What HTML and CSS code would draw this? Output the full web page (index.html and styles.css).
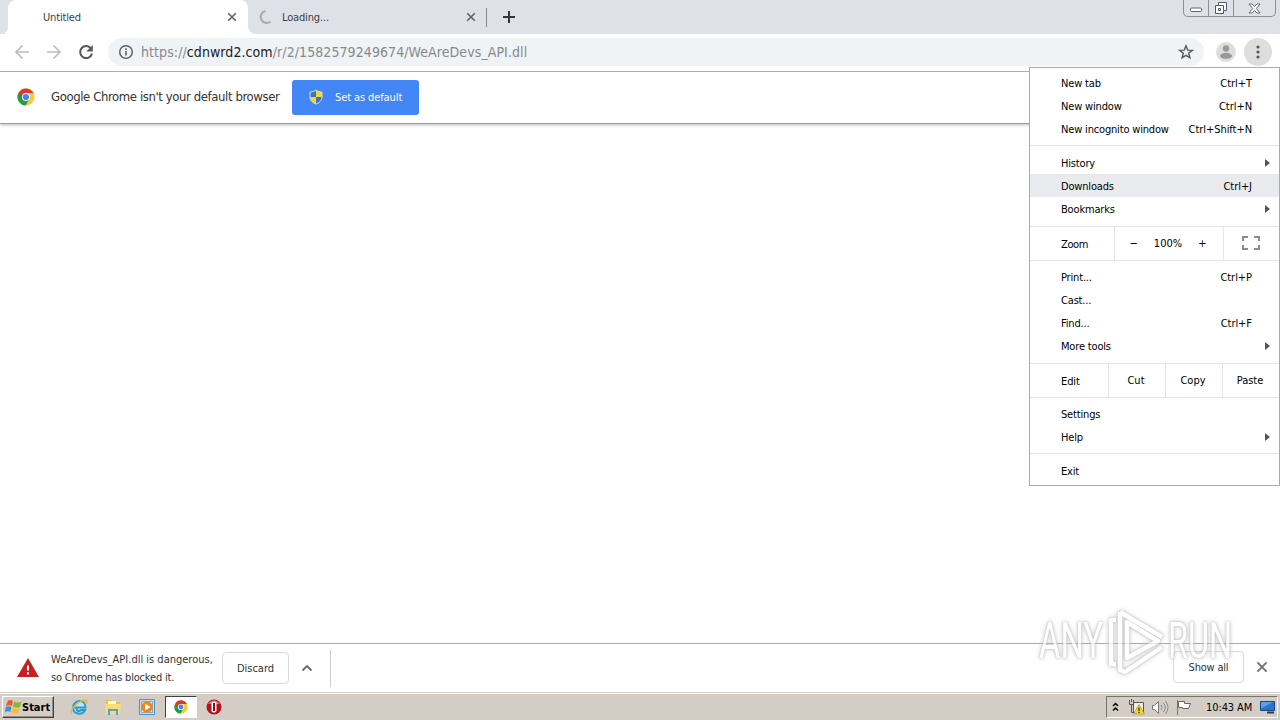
FILE: index.html
```html
<!DOCTYPE html>
<html lang="en">
<head>
    <meta charset="UTF-8">
    <title>Untitled</title>
    <link rel="stylesheet" href="styles.css">
</head>
<body>
    <svg class="defs" width="0" height="0">
        <symbol id="chrome" viewBox="0 0 18 18">
            <circle cx="9" cy="9" r="8.5" fill="#fcc934"/>
            <path d="M9 9 1.6 4.7A8.5 8.5 0 0 0 8.6 17.5L12.4 11z" fill="#1e9e4b"/>
            <path d="M1.6 4.7A8.5 8.5 0 0 1 16.5 5H9L5.6 11z" fill="#e0382b"/>
            <circle cx="9" cy="9" r="4" fill="#fff"/>
            <circle cx="9" cy="9" r="3.1" fill="#4285f4"/>
        </symbol>
        <symbol id="close" viewBox="0 0 10 10">
            <path d="M1.2 1.2 8.8 8.8M8.8 1.2 1.2 8.8" fill="none" stroke="currentColor" stroke-width="1.6"/>
        </symbol>
    </svg>

    <header class="tabstrip">
        <div class="edge"></div>
        <div class="tab active">
            <span class="tab-title">Untitled</span>
            <svg class="close" width="10" height="10"><use href="#close"/></svg>
        </div>
        <div class="tab loading">
            <svg class="spinner" width="16" height="16" viewBox="0 0 16 16"><path d="M7.5 2A6 6 0 1 0 12.500 12.500" fill="none" stroke="#a9abaf" stroke-width="2"/></svg>
            <span class="tab-title">Loading...</span>
            <svg class="close" width="10" height="10"><use href="#close"/></svg>
        </div>
        <svg class="plus" width="12" height="12" viewBox="0 0 12 12"><path d="M6 0v12M0 6h12" stroke="#33363a" stroke-width="2"/></svg>
        <div class="window-buttons">
            <span class="wb min"><svg width="14" height="6" viewBox="0 0 14 6"><rect x="1.5" y="1" width="11" height="3.5" rx="1" fill="#fff" stroke="#62666c"/></svg></span>
            <span class="wb max"><svg width="14" height="14" viewBox="0 0 14 14"><path d="M4.5 1.500h8v8h-3v3h-8v-8h3z" fill="#fff" stroke="#555a62"/><path d="M4.500 4.500h5v5M4.500 7.500h2v2h-2z" fill="none" stroke="#555a62"/></svg></span>
            <span class="wb quit"><svg width="13" height="11" viewBox="0 0 13 11"><path d="M1 1h3.200l2.300 2.500L8.800 1H12L8.300 5.500 12 10H8.800L6.500 7.500 4.200 10H1l3.700-4.500z" fill="#fff" stroke="#666a71"/></svg></span>
        </div>
    </header>

    <nav class="toolbar">
        <svg class="nav-icon dim" width="16" height="16" viewBox="0 0 16 16"><path d="M15 8H2.500M8.500 1.500 2 8l6.500 6.500"/></svg>
        <svg class="nav-icon dim" width="16" height="16" viewBox="0 0 16 16"><path d="M1 8h12.500M7.500 1.500 14 8l-6.500 6.500"/></svg>
        <svg class="nav-icon" width="16" height="16" viewBox="0 0 16 16"><path d="M13.200 4.800A6 6 0 1 0 14 9.500"/><path class="fill" d="M14.800 1v6.500H8.300z"/></svg>
        <div class="address">
            <svg class="info" width="16" height="16" viewBox="0 0 16 16"><circle cx="8" cy="8" r="6.300" fill="none" stroke="#5f6368" stroke-width="1.500"/><path d="M8 7v4.500M8 4.300v1.600" stroke="#5f6368" stroke-width="1.600"/></svg>
            <span class="url">https://<b>cdnwrd2.com</b>/r/2/1582579249674/WeAreDevs_API.dll</span>
            <svg class="star" width="16" height="16" viewBox="0 0 16 16"><path d="m8 1.800 1.700 4.300 4.600.3-3.600 2.900 1.200 4.500L8 11.300l-3.900 2.500 1.200-4.500-3.600-2.900 4.600-.3z" fill="none" stroke="#55595e" stroke-width="1.400"/></svg>
        </div>
        <svg class="avatar" width="20" height="20" viewBox="0 0 20 20"><circle cx="10" cy="10" r="10" fill="#dedede"/><circle cx="10" cy="6.500" r="3.200" fill="#999"/><ellipse cx="10" cy="13.800" rx="6" ry="3" fill="#999"/></svg>
        <svg class="dots" width="28" height="28" viewBox="0 0 28 28"><circle cx="14" cy="14" r="14" fill="#dedede"/><g fill="#55585c"><circle cx="14" cy="9" r="1.600"/><circle cx="14" cy="14" r="1.600"/><circle cx="14" cy="19" r="1.600"/></g></svg>
    </nav>

    <section class="infobar">
        <svg class="logo" width="18" height="18"><use href="#chrome"/></svg>
        <span class="message">Google Chrome isn't your default browser</span>
        <button class="default">
            <svg width="14" height="16" viewBox="0 0 14 16"><path d="M7 1C5 2.500 3 3 1 3v5c0 3.500 3 6 6 7 3-1 6-3.500 6-7V3c-2 0-4-.5-6-2z" fill="#f8d23c"/><path d="M7 1C5 2.500 3 3 1 3v5h6zM7 8h6c0 3.500-3 6-6 7z" fill="#3278c8"/><path d="M7 1C5 2.500 3 3 1 3v5c0 3.500 3 6 6 7 3-1 6-3.500 6-7V3c-2 0-4-.5-6-2z" fill="none" stroke="#e5e1b2"/></svg>
            <span>Set as default</span>
        </button>
    </section>

    <main class="page"></main>

    <section class="shelf">
        <svg class="warning" width="22" height="20" viewBox="0 0 22 20"><path d="M11 0 22 19H0z" fill="#c5221f"/><path d="M11 7.500v5M11 14.200v2.200" stroke="#fff" stroke-width="2"/></svg>
        <p class="danger">WeAreDevs_API.dll is dangerous,<br><span class="blocked">so Chrome has blocked it.</span></p>
        <button class="discard">Discard</button>
        <svg class="chevron" width="12" height="8" viewBox="0 0 12 8"><path d="m1.500 6.500 4.500-4.500 4.500 4.500" fill="none" stroke="#686b70" stroke-width="1.800"/></svg>
        <div class="divider"></div>
        <button class="show-all">Show all</button>
        <svg class="shelf-close" width="12" height="12"><use href="#close"/></svg>
    </section>

    <footer class="taskbar">
        <div class="start">
            <svg width="17" height="16" viewBox="0 0 17 16"><path d="M2.500 2.500Q5 0 8 2L6.800 7Q4 5.500 1 7z" fill="#e85d27"/><path d="M9 2.500q3.500 2 7.500.3L15 8q-3.500 1.500-7-.5z" fill="#83b93b"/><path d="M.8 8Q3.500 6.500 6.500 8l-1.300 5Q3 11.500 0 13z" fill="#3f8ed0"/><path d="M7.500 8.500q3.500 2 7 .5l-1.500 5q-3.500 1.500-7-.5z" fill="#f8be2c"/></svg>
            <span>Start</span>
        </div>
        <svg class="task" width="18" height="18" viewBox="0 0 18 18"><path d="M4 9.500h11.500C15.500 0 3 1.500 3 9.800c0 7 9.500 7.700 12 2.200h-4c-1.500 2-4.500 1-4.500-1.500" fill="#bce8fa" stroke="#249bd8" stroke-width="2"/><path d="M1.500 16C-1 11 10 2 15.500 2c2.500 0 1.500 3 .5 4" fill="none" stroke="#e9b940" stroke-width="1.500"/></svg>
        <svg class="task" width="18" height="18" viewBox="0 0 18 18"><path d="M2 2h6l1 2h7v11H2z" fill="#e9bf4e"/><path d="M4 3h8v4H4z" fill="#fffce2"/><path d="M1 6h16l-1 10H2z" fill="#f8dc78"/><path d="M4 17v-6h10v6h-2v-4H6v4z" fill="#4ba5db"/></svg>
        <svg class="task" width="18" height="18" viewBox="0 0 18 18"><path d="M1.500 1.500h15v15h-15z" fill="#c2dcf0" stroke="#4b93c9"/><path d="M3.500 3.500h11v11h-11z" fill="#e4eef5" stroke="#78add2"/><circle cx="9" cy="9" r="5.800" fill="#f28518"/><path d="m7 5.500 5.500 3.500L7 12.500z" fill="#fff"/></svg>
        <div class="task-active"><svg width="14" height="14"><use href="#chrome"/></svg></div>
        <svg class="task opera" width="16" height="16" viewBox="0 0 16 16"><circle cx="8" cy="8" r="7.500" fill="#b3131b"/><path d="M2 5a7 7 0 0 1 12 0z" fill="#dd6d6d"/><rect x="5.500" y="2.500" width="5" height="11" rx="2" fill="#fff"/><path d="M8 4v8" stroke="#8b1015" stroke-width="2"/></svg>
        <div class="tray">
            <svg class="more" width="7" height="10" viewBox="0 0 7 10"><path d="m1 4 2.500-2.500L6 4M1 8.500 3.500 6 6 8.500" fill="none" stroke="#000" stroke-width="1.500"/></svg>
            <svg class="network" width="17" height="16" viewBox="0 0 17 16"><path d="M5.500 3.500h10v10h-10z" fill="#eee" stroke="#555"/><path d="M1.500 1v4.500h4V1M3.500 0v3M3.500 6v7.500h4" fill="none" stroke="#555"/><path d="m11 5.500 5.500 9.500h-11z" fill="#f7d821" stroke="#ab8300" stroke-width=".6"/><path d="M11 8.500v3.500M11 12.800V14" stroke="#222" stroke-width="1.200"/></svg>
            <svg class="volume" width="17" height="15" viewBox="0 0 17 15"><path d="M.5 5.500h2l4-4v12l-4-4h-2z" fill="#fff" stroke="#777"/><path d="M9 5q2 2.500 0 5M11.500 3q3.500 4.500 0 9M13.500 1q5 6.500 0 13" fill="none" stroke="#8c8c8c"/></svg>
            <svg class="flag" width="17" height="15" viewBox="0 0 17 15"><path d="M2.500 1.500h6v2h6l-2 5h-6v-1h-4z" fill="#fff" stroke="#666"/><path d="M1.500 0v15" stroke="#777"/></svg>
            <time>10:43 AM</time>
            <svg class="desktop" width="15" height="14" viewBox="0 0 15 14"><path d="M.5 1.500h14v9H.5z" fill="#2b74c7" stroke="#15498b"/><path d="M1 2h12L2 8H1z" fill="#5da0e5"/><path d="M7 12.500h7" stroke="#263c5b" stroke-width="2"/></svg>
        </div>
    </footer>

    <aside class="menu">
        <div class="group first">
            <div class="item"><span>New tab</span><kbd>Ctrl+T</kbd></div>
            <div class="item"><span>New window</span><kbd>Ctrl+N</kbd></div>
            <div class="item"><span>New incognito window</span><kbd>Ctrl+Shift+N</kbd></div>
        </div>
        <div class="group second">
            <div class="item"><span>History</span><i class="arrow"></i></div>
            <div class="item hover"><span>Downloads</span><kbd>Ctrl+J</kbd></div>
            <div class="item"><span>Bookmarks</span><i class="arrow"></i></div>
        </div>
        <div class="split">
            <span class="label zoom-label">Zoom</span>
            <span class="cell zoom"><b>−</b><span>100%</span><b>+</b></span>
            <span class="cell full"><svg width="18" height="14" viewBox="0 0 18 14"><path d="M1 5V1h5M12 1h5v4M17 9v4h-5M6 13H1V9" fill="none" stroke="#8b8d90" stroke-width="2"/></svg></span>
        </div>
        <div class="group">
            <div class="item"><span>Print...</span><kbd>Ctrl+P</kbd></div>
            <div class="item"><span>Cast...</span></div>
            <div class="item"><span>Find...</span><kbd>Ctrl+F</kbd></div>
            <div class="item"><span>More tools</span><i class="arrow"></i></div>
        </div>
        <div class="split">
            <span class="label edit-label">Edit</span>
            <span class="cell edit">Cut</span>
            <span class="cell edit">Copy</span>
            <span class="cell edit">Paste</span>
        </div>
        <div class="group settings">
            <div class="item"><span>Settings</span></div>
            <div class="item"><span>Help</span><i class="arrow"></i></div>
        </div>
        <div class="group last">
            <div class="item"><span>Exit</span></div>
        </div>
    </aside>

    <svg class="watermark" width="210" height="80" viewBox="0 0 210 80">
        <g class="mark">
            <text x="9" y="56" textLength="64" lengthAdjust="spacingAndGlyphs">ANY</text>
            <path d="M86 18h-5v44h5M90 10v58l5 2 37-25M90 10l42 25M97 20v36l31-17z"/>
            <text x="138" y="56" textLength="64" lengthAdjust="spacingAndGlyphs">RUN</text>
        </g>
    </svg>
</body>
</html>
```
FILE: styles.css
```css
* {
    box-sizing: border-box;
}

body {
    margin: 0;
    width: 1280px;
    height: 720px;
    overflow: hidden;
    display: flex;
    flex-direction: column;
    background: #fff;
    color: #333;
    font-family: "DejaVu Sans Condensed", "DejaVu Sans", sans-serif;
    font-stretch: condensed;
    font-size: 11px;
    white-space: nowrap;
}

svg {
    display: block;
    flex: none;
}

button {
    font: inherit;
    padding: 0;
}

.defs {
    position: absolute;
}

/* tabs */
.tabstrip {
    height: 34px;
    flex: none;
    display: flex;
    align-items: center;
    background: #dee1e8;
}

.edge {
    width: 8px;
    height: 34px;
    background: #dee1e8;
    border-bottom-right-radius: 7px;
    box-shadow: 5px 5px 0 #fff;
    clip-path: inset(0);
}

.tab {
    height: 34px;
    display: flex;
    align-items: center;
    color: #3c4043;
}

.tab-title {
    letter-spacing: -.15px;
}

.active {
    width: 240px;
    padding: 0 11px 0 35px;
    background: #fff;
    border-radius: 8px 8px 0 0;
}

.tab .close {
    margin-left: auto;
    color: #5f6368;
}

.loading {
    width: 239px;
    padding: 0 11px 0 10px;
    position: relative;
    background: #dee1e8;
    border-bottom-left-radius: 8px;
    box-shadow: -6px 6px 0 #fff;
    clip-path: inset(0);
}

.loading::after {
    content: "";
    position: absolute;
    right: 0;
    top: 8px;
    width: 1px;
    height: 19px;
    background: #85888e;
}

.spinner {
    margin-right: 8px;
}

.plus {
    margin-left: 16px;
}

.window-buttons {
    margin: 0 4px 0 auto;
    height: 17px;
    align-self: flex-start;
    display: flex;
    border: 1px solid #8d9097;
    border-top: 0;
    border-radius: 0 0 5px 5px;
}

.wb {
    width: 25px;
    display: grid;
    place-items: center;
    border-right: 1px solid #8d9097;
}

.min {
    padding-top: 4px;
}

.quit {
    width: 41px;
    border: 0;
}

/* toolbar */
.toolbar {
    height: 38px;
    flex: none;
    display: flex;
    align-items: center;
    padding: 0 8px 1px 14px;
    border-bottom: 1px solid #aaa;
}

.nav-icon {
    margin-right: 16px;
    fill: none;
    stroke: #55585c;
    stroke-width: 2;
}

.dim {
    stroke: #bbbdbf;
    stroke-width: 1.7;
}

.nav-icon .fill {
    fill: #55585c;
    stroke: none;
}

.address {
    width: 1096px;
    height: 28px;
    margin-left: -2px;
    padding: 0 10px;
    display: flex;
    align-items: center;
    border-radius: 14px;
    background: #f0f3f5;
}

.url {
    margin-left: 7px;
    font-size: 14px;
    letter-spacing: .08px;
    color: #85898d;
}

.url b {
    color: #202124;
    font-weight: normal;
}

.star {
    margin-left: auto;
}

.avatar {
    margin-left: 12px;
}

.dots {
    margin-left: 8px;
}

/* default browser bar */
.infobar {
    height: 52px;
    flex: none;
    display: flex;
    align-items: center;
    padding: 0 17px 1px;
    border-bottom: 1px solid #9c9c9c;
    box-shadow: 0 1px 3px #bbb;
}

.message {
    margin-left: 16px;
    width: 228px;
    padding-bottom: 1px;
    font-size: 13px;
    letter-spacing: -.4px;
}

.default {
    width: 127px;
    height: 35px;
    margin-left: 13px;
    padding-left: 17px;
    display: flex;
    align-items: center;
    gap: 12px;
    border: 0;
    border-radius: 3px;
    background: #4285f4;
    color: #fff;
    letter-spacing: -.1px;
}

.page {
    flex: 1;
}

/* downloads */
.shelf {
    height: 49px;
    flex: none;
    display: flex;
    align-items: center;
    padding: 0 12px 0 17px;
    border-top: 1px solid #aaa;
}

.danger {
    width: 161px;
    margin: 1px 0 0 12px;
    line-height: 18px;
}

.blocked {
    letter-spacing: -.2px;
}

.discard,
.show-all {
    width: 67px;
    height: 32px;
    margin-left: 10px;
    border: 1px solid #d8dadd;
    border-radius: 4px;
    background: #fff;
    color: #333;
}

.chevron {
    margin-left: 12px;
}

.divider {
    width: 1px;
    height: 37px;
    margin-left: 17px;
    background: #cdcdcd;
}

.show-all {
    width: 71px;
    margin: 0 12px 2px auto;
    letter-spacing: -.2px;
}

.shelf-close {
    margin-bottom: 2px;
    color: #6f7276;
}

/* taskbar */
.taskbar {
    height: 28px;
    flex: none;
    display: flex;
    align-items: center;
    padding: 2px 2px 1px;
    background: #d4cdc6;
    border-top: 1px solid #d4cdc6;
    box-shadow: inset 0 1px #fff;
}

.start {
    width: 52px;
    height: 22px;
    padding-left: 2px;
    display: flex;
    align-items: center;
    border: 1px solid;
    border-color: #fff #404040 #404040 #fff;
    box-shadow: inset -1px -1px #929089;
    color: #000;
    font-weight: bold;
}

.task {
    margin-left: 16px;
}

.start + .task {
    margin-left: 16px;
}

.task-active {
    width: 32px;
    height: 22px;
    margin-left: 9px;
    display: grid;
    place-items: center;
    background: #fff;
    border: 1px solid;
    border-color: #404040 #fff #fff #404040;
}

.opera {
    margin-left: 9px;
}

.tray {
    width: 172px;
    height: 22px;
    margin-left: auto;
    padding-left: 5px;
    display: flex;
    align-items: center;
    border: 1px solid;
    border-color: #77736e #fff #fff #77736e;
    color: #000;
}

.network {
    margin-left: 9px;
}

.volume {
    margin-left: 7px;
}

.flag {
    margin-left: 7px;
}

.tray time {
    width: 47px;
    margin-left: 13px;
    letter-spacing: -.1px;
}

.desktop {
    margin-left: 7px;
}

/* browser menu */
.menu {
    position: absolute;
    left: 1029px;
    top: 67px;
    width: 251px;
    height: 419px;
    padding-top: 4px;
    border: 1px solid #aaa;
    background: #fff;
    color: #000;
}

.group {
    padding: 5px 0;
    border-top: 1px solid #e5e5e5;
}

.first {
    padding: 0 0 4px;
    border: 0;
}

.second {
    padding-bottom: 6px;
}

.second span,
.second kbd,
.last span {
    padding-top: 1px;
}

.settings {
    padding-bottom: 4px;
}

.item {
    height: 23px;
    padding: 0 27px 0 31px;
    display: flex;
    align-items: center;
    position: relative;
    letter-spacing: -.17px;
}

.item kbd {
    margin-left: auto;
    font: inherit;
    letter-spacing: -.05px;
}

.hover {
    background: #e8eaed;
}

.arrow {
    position: absolute;
    right: 9px;
    top: 7px;
    border-left: 5px solid #555;
    border-top: 4px solid transparent;
    border-bottom: 4px solid transparent;
}

.second .arrow {
    top: 8px;
}

.split {
    height: 34px;
    display: flex;
    border-top: 1px solid #e5e5e5;
}

.label {
    padding: 2px 0 0 31px;
    display: flex;
    align-items: center;
    letter-spacing: -.4px;
}

.edit-label {
    letter-spacing: -.1px;
}

.zoom-label {
    width: 84px;
}

.edit-label {
    width: 78px;
}

.cell {
    display: flex;
    align-items: center;
    justify-content: center;
    padding-right: 2px;
    border-left: 1px solid #e5e5e5;
}

.zoom {
    width: 109px;
    gap: 16px;
}

.zoom b {
    font-weight: normal;
}

.full {
    width: 56px;
}

.full svg {
    margin-bottom: 1px;
}

.edit {
    width: 57px;
}

/* watermark */
.watermark {
    position: absolute;
    left: 1030px;
    top: 602px;
    filter: drop-shadow(0 0 1px #aaa) drop-shadow(0 0 2px #bbb);
    opacity: .72;
    overflow: visible;
}

.mark {
    fill: #fff;
    font: 50px/1 Roboto, sans-serif;
}

.mark path {
    fill: none;
    stroke: #fff;
    stroke-width: 4.5;
    stroke-linejoin: round;
}
```
